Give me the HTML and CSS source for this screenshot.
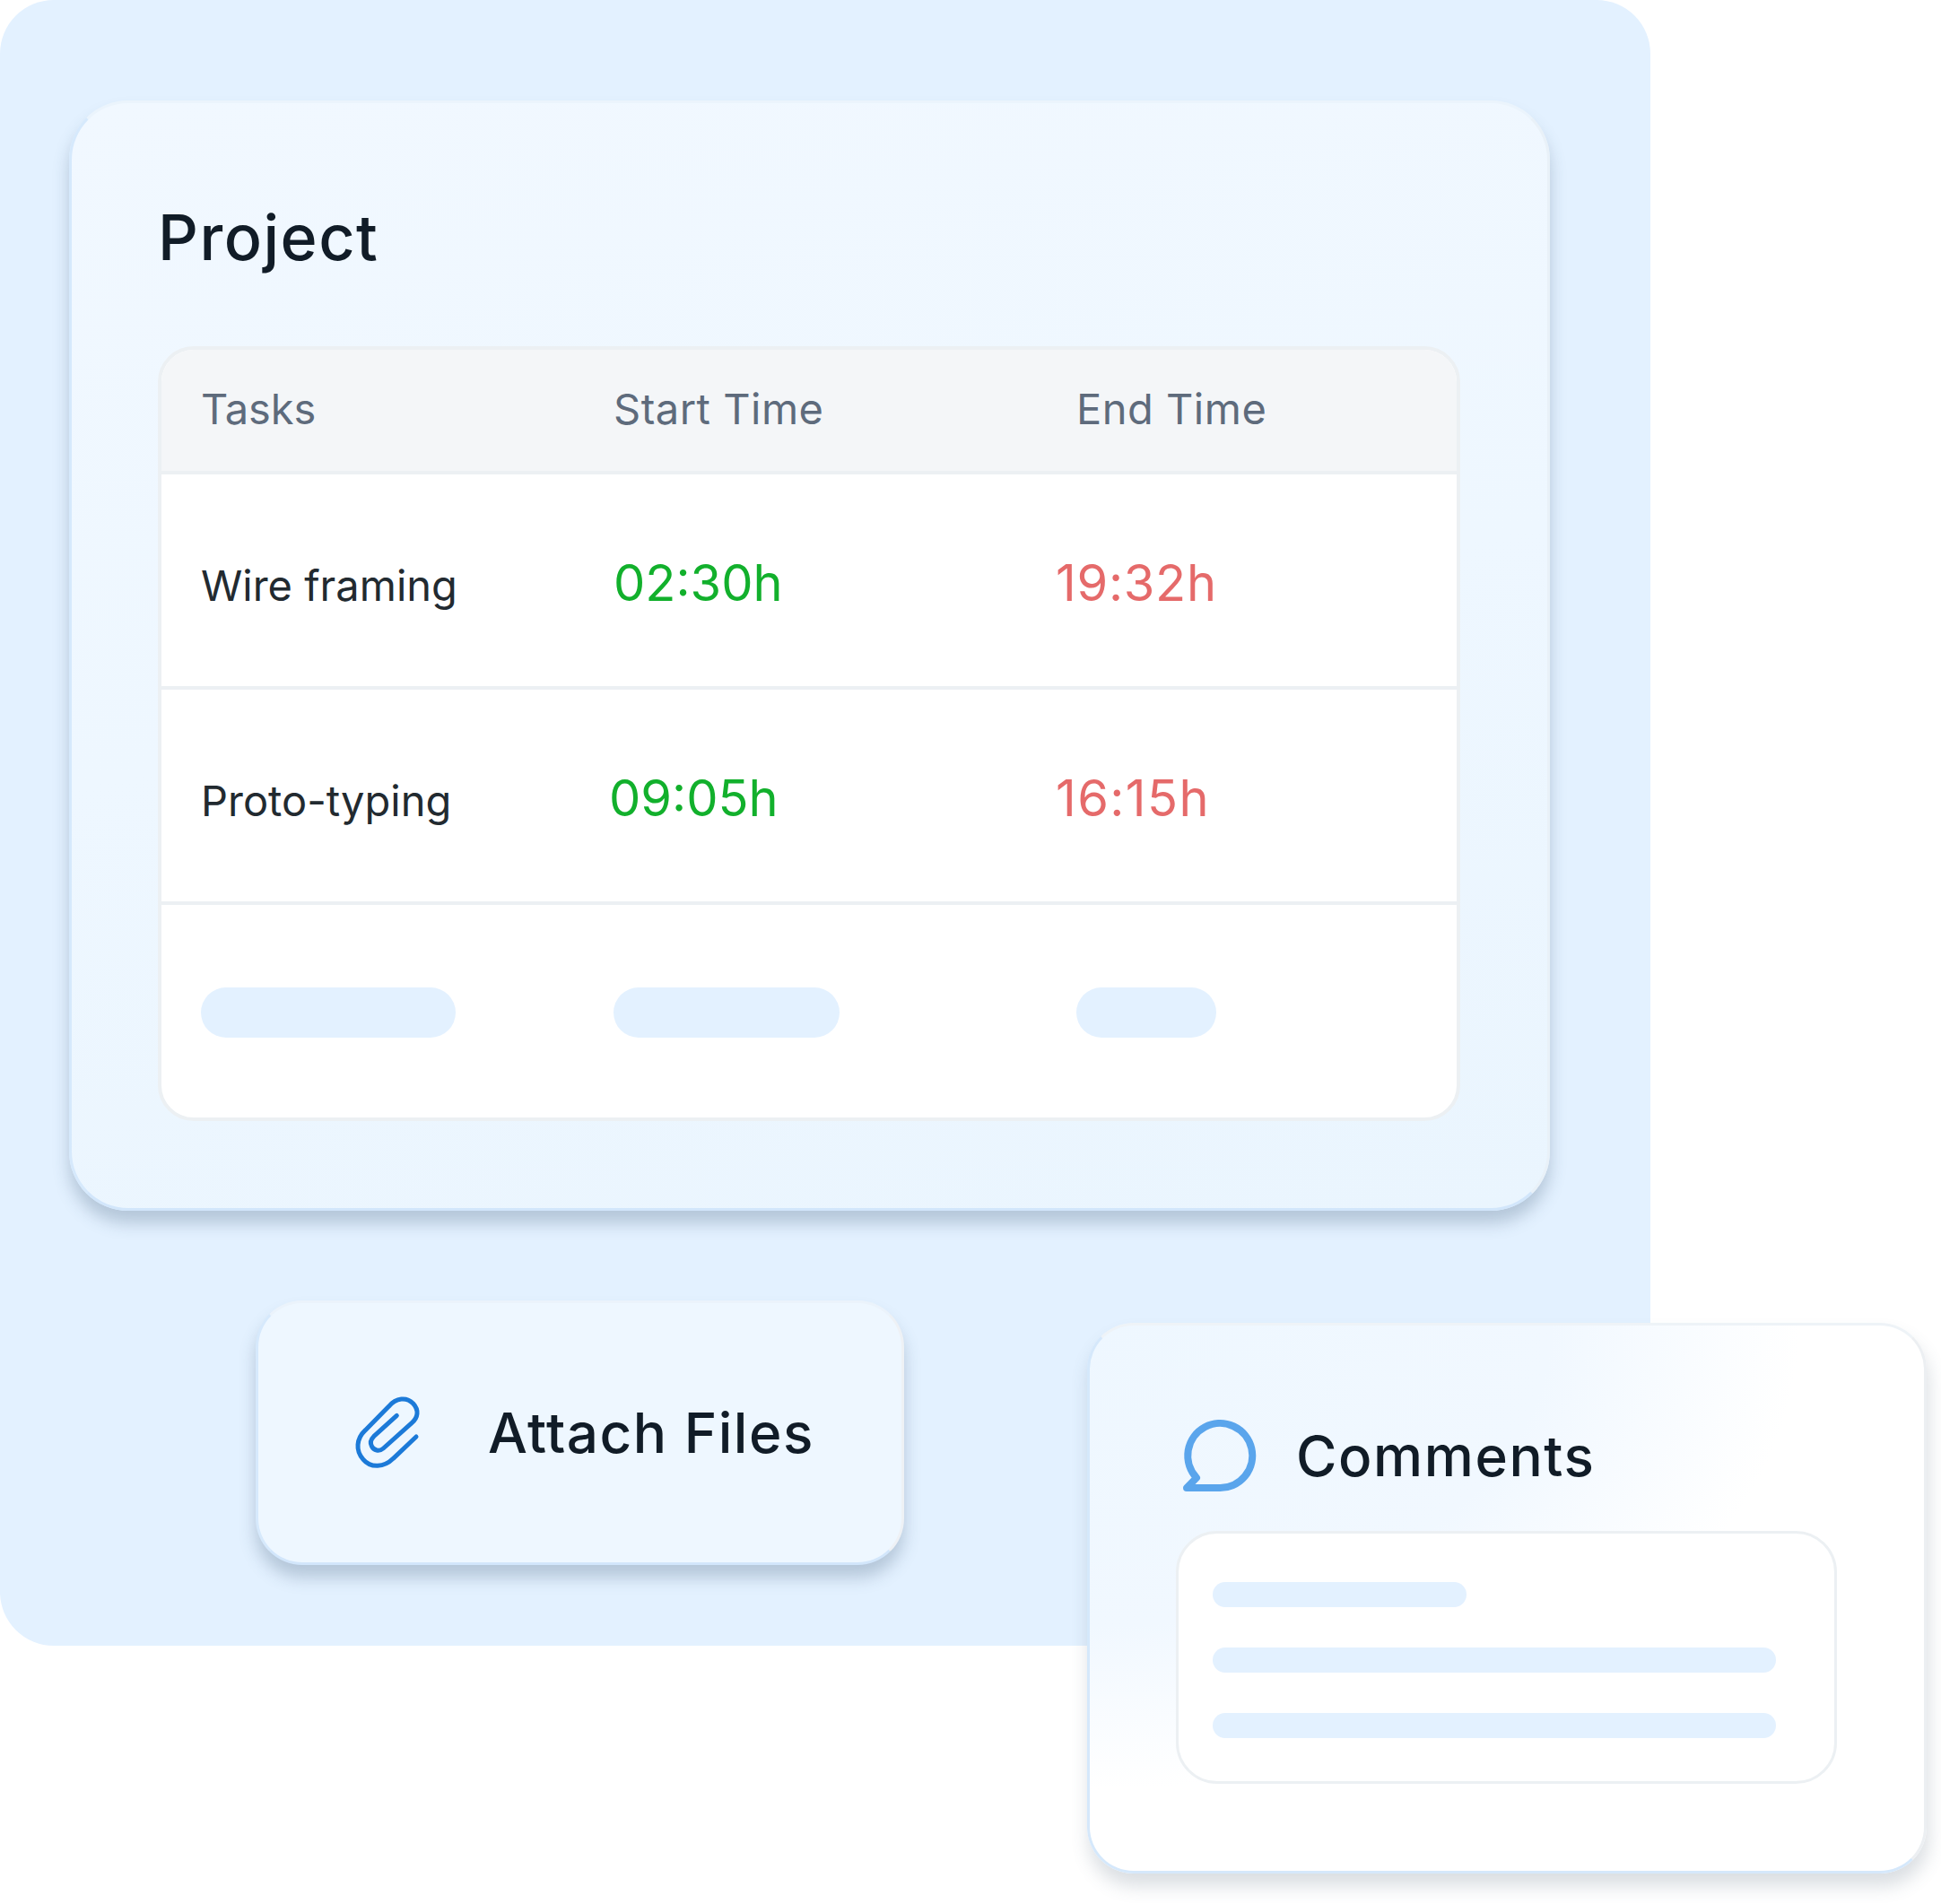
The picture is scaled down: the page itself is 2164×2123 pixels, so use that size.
FILE: index.html
```html
<!DOCTYPE html>
<html lang="en">

<head>
    <meta charset="utf-8">
    <title>Project</title>
    <link rel="stylesheet" href="styles.css">
</head>

<body>
    <section class="backdrop">
        <article class="project">
            <h1>Project</h1>
            <div class="table">
                <div class="row head">
                    <div class="head-tasks">Tasks</div>
                    <div>Start Time</div>
                    <div class="head-end">End Time</div>
                </div>
                <div class="row task">
                    <div class="name">Wire framing</div>
                    <div class="time start">02:30h</div>
                    <div class="time end">19:32h</div>
                </div>
                <div class="row task">
                    <div class="name">Proto-typing</div>
                    <div class="time start nudge">09:05h</div>
                    <div class="time end wide">16:15h</div>
                </div>
                <div class="row blank">
                    <div class="pill pill-task"></div>
                    <div class="pill pill-start"></div>
                    <div class="pill pill-end"></div>
                </div>
            </div>
        </article>

        <div class="attach">
            <svg class="clip" viewBox="0 0 390 390" fill="none" stroke="#1c7ad8" stroke-width="15" stroke-linecap="round" stroke-linejoin="round">
                <path d="M282 219L205 292C175 322 130 325 105 295C78 265 82 225 112 197L190 118C215 88 250 85 272 108C292 130 288 155 268 172L172 258C158 270 140 265 133 250C127 238 130 228 140 218L217 148" />
            </svg>
            <span>Attach Files</span>
        </div>
    </section>

    <article class="comments">
        <header>
            <svg class="bubble" viewBox="0 0 270 264" fill="none" stroke="#5aa5ec" stroke-width="24" stroke-linecap="round" stroke-linejoin="round">
                <path d="M132 240H24L57 206A108 108 0 1 1 132 240Z" />
            </svg>
            <h2>Comments</h2>
        </header>
        <div class="comment-box">
            <div class="line short"></div>
            <div class="line"></div>
            <div class="line"></div>
        </div>
    </article>
</body>

</html>
```

FILE: styles.css
```css
* {
    box-sizing: border-box;
}

body {
    margin: 0;
    width: 2164px;
    height: 2123px;
    position: relative;
    overflow: hidden;
    background-color: #fff;
    font-family: Inter, "Liberation Sans", sans-serif;
}

.backdrop {
    width: 1840px;
    height: 1835px;
    padding: 112px 0 0 77px;
    background-color: #e3f1ff;
    border-radius: 60px;
}

/* project card */
.project {
    width: 1651px;
    height: 1238px;
    padding: 108px 97px 0 96px;
    border: 3px solid;
    border-color: #ebf4fc #e9f1f8 #d2e6fb #d6e9fc;
    border-radius: 66px;
    background: linear-gradient(170deg, #f1f8ff 0%, #eef7ff 50%, #eaf5fe 100%);
    box-shadow: 0 14px 18px rgba(60, 90, 120, .28);
}

.project h1 {
    margin: 0;
    font-size: 70px;
    line-height: 84px;
    font-weight: 500;
    letter-spacing: 1.5px;
    color: #111c27;
}

.table {
    margin-top: 79px;
    height: 864px;
    background-color: #fff;
    border: 4px solid #ecf0f3;
    border-radius: 40px;
    overflow: hidden;
}

.row {
    display: grid;
    grid-template-columns: 460px 515px 1fr;
    align-items: center;
    padding-left: 44px;
    border-bottom: 4px solid #ecf0f3;
    height: 240px;
    font-size: 47px;
    color: #222a30;
}

.row.head {
    height: 139px;
    padding-bottom: 4px;
    background-color: #f4f6f8;
    letter-spacing: .5px;
    color: #5e6b7c;
}

.head-tasks {
    letter-spacing: -.1px;
}

.head-end {
    margin-left: 1px;
}

.row.task {
    padding-top: 6px;
}

.row.blank {
    border-bottom: 0;
    height: 237px;
    padding-top: 2px;
}

.name {
    padding-top: 4px;
}

.time {
    font-size: 56px;
}

.start {
    color: #12b02c;
}

.start.nudge {
    margin-left: -5px;
}

.end {
    margin-left: -22px;
    letter-spacing: .7px;
    color: #e56a6a;
}

.end.wide {
    letter-spacing: 1.4px;
}

.pill {
    height: 56px;
    border-radius: 28px;
    background-color: #e3f1ff;
}

.pill-task {
    width: 284px;
}

.pill-start {
    width: 252px;
}

.pill-end {
    width: 156px;
    margin-left: 1px;
}

/* attach button */
.attach {
    width: 723px;
    height: 295px;
    margin: 100px 0 0 208px;
    padding-left: 114px;
    display: flex;
    align-items: center;
    gap: 76px;
    border: 3px solid;
    border-color: #ebf3fb #eef1f5 #d2e6fb #d6e9fc;
    border-radius: 52px;
    background-color: #eef7ff;
    box-shadow: 0 14px 18px rgba(60, 90, 120, .28);
    font-size: 62px;
    font-weight: 500;
    letter-spacing: 1.5px;
    color: #111c27;
}

.clip {
    width: 130px;
    height: 130px;
    margin: -7px -32px 0 -32px;
    flex: none;
}

/* comments card, sits over the corner of the backdrop */
.comments {
    position: absolute;
    left: 1212px;
    top: 1475px;
    width: 936px;
    height: 614px;
    padding: 100px 96px 0 96px;
    border: 3px solid;
    border-color: #eef3f7 #eceff2 #d5e8fb #d5e8fb;
    border-radius: 52px;
    background: radial-gradient(ellipse 85% 85% at 0 0, #eef7ff 0%, #f1f8ff 65%, #fff 100%);
    box-shadow: 2px 14px 20px rgba(70, 90, 110, .2);
}

.comments header {
    display: flex;
    align-items: center;
    gap: 40px;
    height: 90px;
}

.comments h2 {
    margin: 0;
    font-size: 62px;
    font-weight: 500;
    letter-spacing: 1.6px;
    color: #111c27;
}

.bubble {
    width: 90px;
    height: 88px;
    margin-left: 4px;
    flex: none;
}

.comment-box {
    margin-top: 39px;
    width: 737px;
    height: 282px;
    padding: 54px 0 0 38px;
    background-color: #fff;
    border: 3px solid #ecf0f3;
    border-radius: 46px;
}

.line {
    width: 628px;
    height: 28px;
    margin-bottom: 45px;
    border-radius: 14px;
    background-color: #e3f1ff;
}

.line.short {
    width: 283px;
}
```
